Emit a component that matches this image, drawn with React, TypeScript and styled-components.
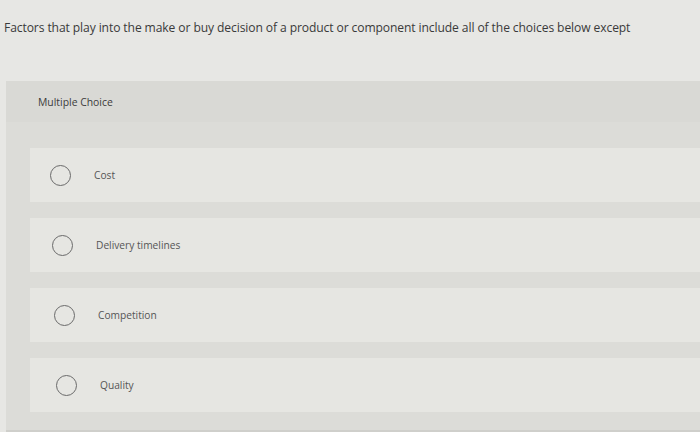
import React from "react";
import styled, { createGlobalStyle } from "styled-components";

const choices = ["Cost", "Delivery timelines", "Competition", "Quality"];

const GlobalStyle = createGlobalStyle`
  html, body {
    margin: 0;
    padding: 0;
    background-color: #e6e6e3;
  }
  body {
    font-family: "Open Sans", "Liberation Sans", sans-serif;
  }
`;

export default function App() {
  return (
    <Page>
      <GlobalStyle />
      <Question>
        Factors that play into the make or buy decision of a product or
        component include all of the choices below except
      </Question>
      <Panel>
        <PanelHeader>Multiple Choice</PanelHeader>
        <ChoiceList>
          {choices.map((choice, index) => (
            <ChoiceRow key={index} shift={index * 2}>
              <Radio />
              <ChoiceLabel>{choice}</ChoiceLabel>
            </ChoiceRow>
          ))}
        </ChoiceList>
      </Panel>
    </Page>
  );
}

const Page = styled.div`
  width: 700px;
  height: 432px;
  overflow: hidden;
  background-color: #e7e7e4;
`;

const Question = styled.div`
  padding: 20px 0 0 4px;
  height: 81px;
  box-sizing: border-box;
  font-size: 12.1px;
  line-height: 16px;
  color: #3a3a3a;
  white-space: nowrap;
  letter-spacing: -0.1px;
`;

const Panel = styled.div`
  margin-left: 6px;
  height: 351px;
  background-color: #dcdcd8;
  border-bottom: 2px solid #cfcfcb;
  box-sizing: border-box;
`;

const PanelHeader = styled.div`
  height: 41px;
  display: flex;
  align-items: center;
  padding-left: 32px;
  font-size: 10.4px;
  color: #3c3c3c;
  background-color: #d9d9d5;
`;

const ChoiceList = styled.div`
  display: flex;
  flex-direction: column;
  gap: 16px;
  padding: 26px 0 0 24px;
`;

const ChoiceRow = styled.div<{ shift: number }>`
  height: 54px;
  display: flex;
  align-items: center;
  padding-left: ${(p) => 20 + p.shift}px;
  background-color: #e6e6e2;
`;

const Radio = styled.div`
  width: 19px;
  height: 19px;
  border-radius: 50%;
  border: 1.5px solid #6a6a6a;
  flex-shrink: 0;
`;

const ChoiceLabel = styled.span`
  margin-left: 23px;
  font-size: 10.2px;
  color: #555;
`;
